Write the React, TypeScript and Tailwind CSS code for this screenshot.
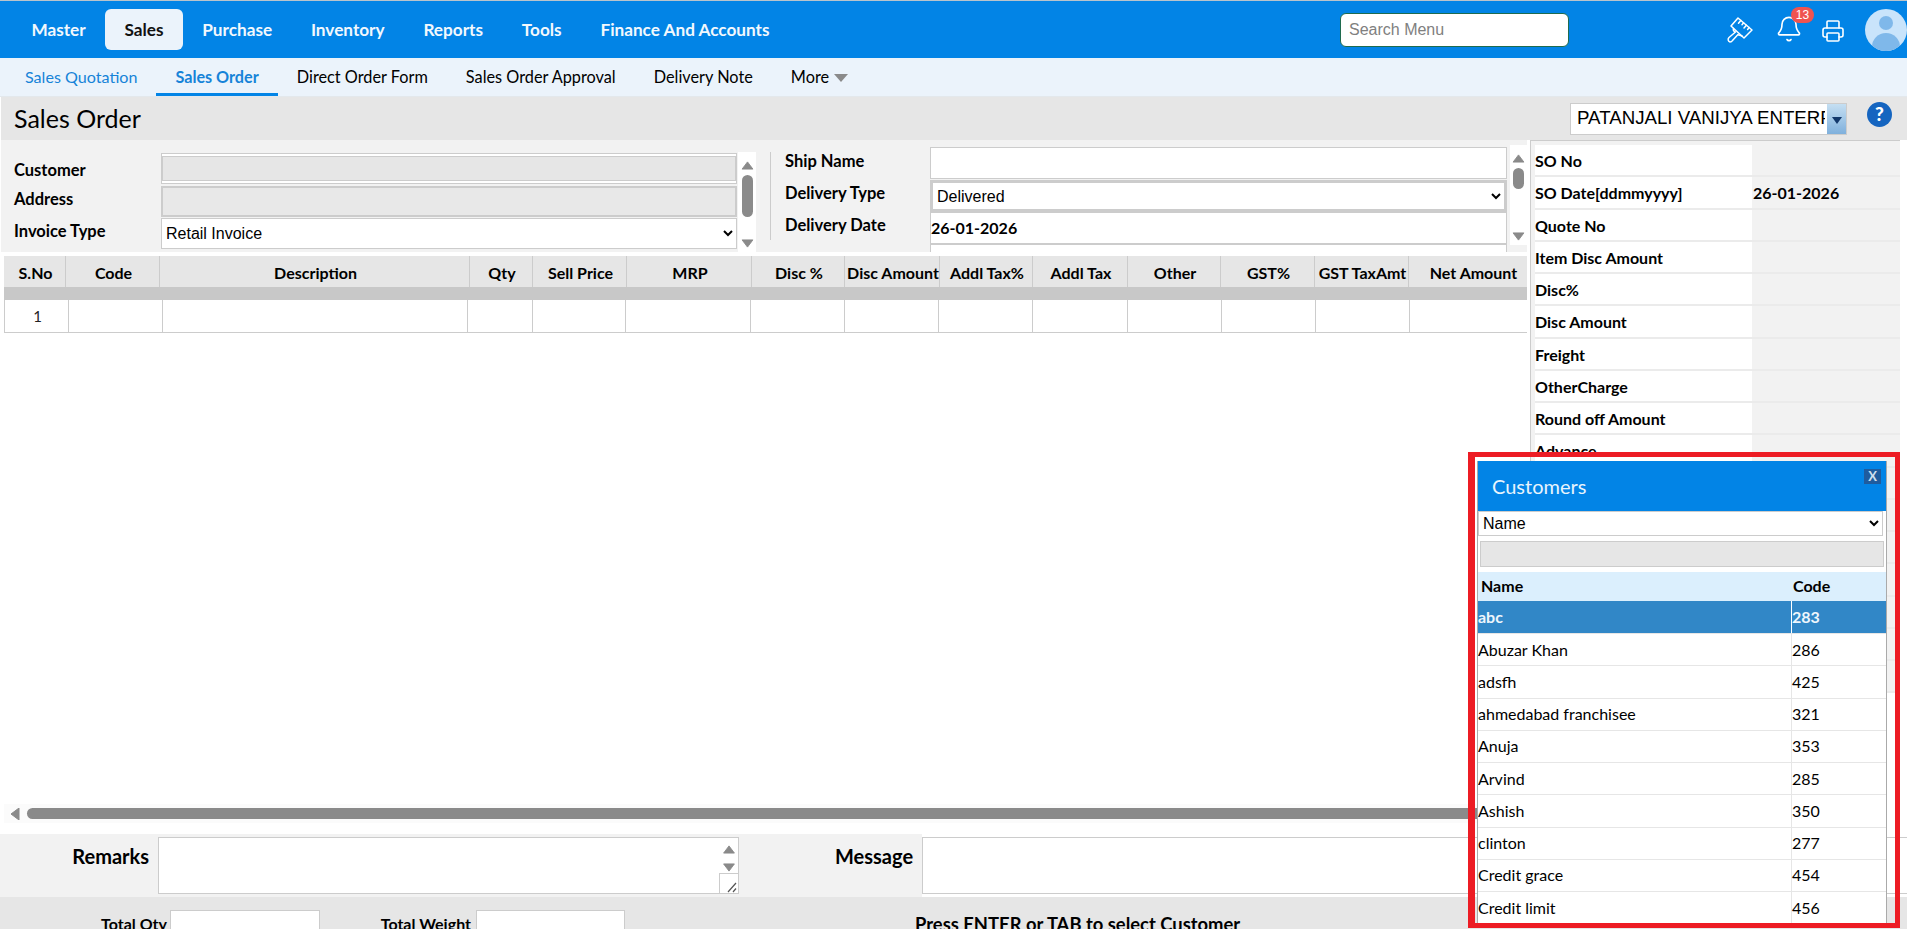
import { Bell, Printer } from "lucide-react"

const navItems = ["Master", "Sales", "Purchase", "Inventory", "Reports", "Tools", "Finance And Accounts"]
const subItems = ["Sales Quotation", "Sales Order", "Direct Order Form", "Sales Order Approval", "Delivery Note"]

const columns = [
    { name: "S.No", head: 62, cell: 65 },
    { name: "Code", head: 94, cell: 94 },
    { name: "Description", head: 310, cell: 305 },
    { name: "Qty", head: 63, cell: 65 },
    { name: "Sell Price", head: 94, cell: 93 },
    { name: "MRP", head: 125, cell: 125 },
    { name: "Disc %", head: 93, cell: 94 },
    { name: "Disc Amount", head: 95, cell: 94 },
    { name: "Addl Tax%", head: 93, cell: 94 },
    { name: "Addl Tax", head: 95, cell: 95 },
    { name: "Other", head: 93, cell: 94 },
    { name: "GST%", head: 94, cell: 94 },
    { name: "GST TaxAmt", head: 94, cell: 94 },
    { name: "Net Amount", head: 118, cell: 117 },
]

const summaryRows = [
    { label: "SO No", value: "" },
    { label: "SO Date[ddmmyyyy]", value: "26-01-2026" },
    { label: "Quote No", value: "" },
    { label: "Item Disc Amount", value: "" },
    { label: "Disc%", value: "" },
    { label: "Disc Amount", value: "" },
    { label: "Freight", value: "" },
    { label: "OtherCharge", value: "" },
    { label: "Round off Amount", value: "" },
    { label: "Advance", value: "" },
    { label: "", value: "" },
    { label: "", value: "" },
    { label: "", value: "" },
    { label: "", value: "" },
    { label: "", value: "" },
    { label: "", value: "" },
    { label: "", value: "" },
]

const customers = [
    { name: "Abuzar Khan", code: "286" },
    { name: "adsfh", code: "425" },
    { name: "ahmedabad franchisee", code: "321" },
    { name: "Anuja", code: "353" },
    { name: "Arvind", code: "285" },
    { name: "Ashish", code: "350" },
    { name: "clinton", code: "277" },
    { name: "Credit grace", code: "454" },
    { name: "Credit limit", code: "456" },
]

const Arrow = ({ dir, className }: { dir: "up" | "down" | "left"; className?: string }) => {
    const points = dir === "up" ? "6,1 12,9 0,9" : dir === "down" ? "0,1 12,1 6,9" : "9,0 9,12 1,6"
    return (
        <svg viewBox={dir === "left" ? "0 0 10 12" : "0 0 12 10"} className={className} fill="#8a8a8a">
            <polygon points={points} stroke="#8a8a8a" strokeLinejoin="round" />
        </svg>
    )
}

const VScroll = ({ thumb, className }: { thumb: string; className?: string }) => (
    <div className={`flex flex-col items-center bg-white ${className}`}>
        <Arrow dir="up" className="mt-[9px] h-[9px] w-[13px] shrink-0" />
        <div className={`mt-[5px] w-[11px] rounded-full bg-[#8a8a8a] ${thumb}`} />
        <div className="flex-1" />
        <Arrow dir="down" className="mb-[4px] h-[9px] w-[13px] shrink-0" />
    </div>
)

const BrushIcon = () => (
    <svg viewBox="0 0 26 26" className="h-[26px] w-[26px]" fill="none" stroke="white" strokeWidth="1.5" strokeLinejoin="round" strokeLinecap="round">
        <path d="M11 1 L25 13 L17 21 L4 9 Z" />
        <path d="M6.5 11.5 C6 13 7 14.5 8.5 15 L2 20.5 C0.5 22 1 24.5 3 25 C4 25 5 24.5 5.5 23.5 L11 17.5 C12.5 18.5 14 18.5 15 19" />
        <path d="M13.8 3.4 L11.5 6.2 M16.6 5.8 L15 7.7 M19.4 8.2 L17 11 M22.2 10.6 L20.6 12.5" />
    </svg>
)

const ResizeCorner = () => (
    <div className="absolute right-0 bottom-0 flex h-[20px] w-[19px] items-end justify-end border-t border-l border-[#ccc] bg-white">
        <svg viewBox="0 0 12 12" className="h-[12px] w-[12px]" stroke="#555" strokeWidth="1.2">
            <path d="M2 11 L10 2 M7 11 L10 7.5" />
        </svg>
    </div>
)

const Label = ({ text, className }: { text: string; className?: string }) => (
    <span className={`text-[16.5px] leading-none font-bold whitespace-nowrap text-black ${className}`}>{text}</span>
)

export default function App() {
    return (
        <div className="relative h-[929px] w-[1907px] overflow-hidden bg-white [font-family:Lato,sans-serif] text-black">
            {/* top bar */}
            <div className="flex h-[58px] items-center border-t border-[#b9c4cc] bg-[#0284e6] pl-[12px]">
                {navItems.map((item) => (
                    <div
                        key={item}
                        className={`flex h-[41px] items-center rounded-[6px] px-[19.4px] text-[17.2px] font-bold whitespace-nowrap ${item === "Sales" ? "bg-[#ebf3fb] text-[#111]" : "text-[#f2f8fd]"}`}
                    >
                        {item}
                    </div>
                ))}
                <div className="ml-auto flex h-[34px] w-[229px] items-center rounded-[6px] border border-[#1f6b4f] bg-white pl-[8px] [font-family:'Liberation_Sans',sans-serif] text-[16px] text-[#808080]">
                    Search Menu
                </div>
                <div className="ml-[158px]">
                    <BrushIcon />
                </div>
                <div className="relative ml-[22px] -mt-[2px]">
                    <Bell size={28} color="white" strokeWidth={1.4} />
                    <span className="absolute top-[-8px] left-[16px] flex h-[16px] w-[23px] items-center justify-center rounded-full bg-[#ef5350] [font-family:'Liberation_Sans',sans-serif] text-[12px] text-white">13</span>
                </div>
                <div className="ml-[18px] mt-[2px]">
                    <Printer size={24} color="white" strokeWidth={1.6} />
                </div>
                <div className="relative ml-[20px] h-[42px] w-[42px] shrink-0 overflow-hidden rounded-full bg-[#c9e4fb]">
                    <div className="absolute top-[7px] left-[14px] h-[14px] w-[14px] rounded-full bg-[#7fb8ea]" />
                    <div className="absolute top-[24px] left-[7px] h-[28px] w-[28px] rounded-full bg-[#7fb8ea]" />
                </div>
            </div>

            {/* sub nav */}
            <div className="flex h-[39px] items-stretch border-b border-[#e3e8ec] bg-[#ebf3fb] pl-[6px] text-[16.3px]">
                {subItems.map((item, i) => (
                    <div
                        key={item}
                        className={`flex items-center px-[19px] whitespace-nowrap ${i === 0 ? "text-[16.1px] text-[#1683d8]" : ""} ${i === 1 ? "border-b-[3px] border-[#0284e6] pt-[3px] text-[16.2px] font-bold text-[#1683d8]" : ""}`}
                    >
                        {item}
                    </div>
                ))}
                <div className="flex items-center gap-[5px] px-[19px]">
                    More
                    <svg viewBox="0 0 14 8" className="mt-[2px] h-[8px] w-[14px]" fill="#8a8a8a">
                        <polygon points="0,0 14,0 7,8" />
                    </svg>
                </div>
            </div>

            {/* title bar */}
            <div className="ml-[1px] flex h-[43px] items-center bg-[#e6e6e6] pl-[13px]">
                <h1 className="text-[25px] font-normal">Sales Order</h1>
                <div className="ml-auto flex h-[32px] w-[277px] items-stretch border border-[#ccc] bg-white">
                    <div className="mr-[2px] flex-1 overflow-hidden pl-[6px] [font-family:'Liberation_Sans',sans-serif] text-[18.7px] leading-[28px] whitespace-nowrap">
                        PATANJALI VANIJYA ENTERPRISES
                    </div>
                    <div className="flex w-[19px] shrink-0 items-center justify-center bg-gradient-to-b from-[#c5dff2] to-[#7fb0dc]">
                        <svg viewBox="0 0 10 7" className="mt-[4px] h-[7px] w-[10px]" fill="#12386b">
                            <polygon points="0,0 10,0 5,7" />
                        </svg>
                    </div>
                </div>
                <div className="mr-[15px] mb-[8px] ml-[20px] flex h-[25px] w-[25px] items-center justify-center rounded-full bg-[#1565c0] text-[19px] font-black text-white">
                    ?
                </div>
            </div>

            {/* main */}
            <div className="flex h-[694px]">
                <div className="flex w-[1530px] shrink-0 flex-col">
                    {/* header form */}
                    <div className="ml-[1px] flex h-[112px] w-[1526px] bg-[#f2f2f2]">
                        <div className="flex w-[736px] shrink-0 flex-col pt-[13px] pl-[13px]">
                            <div className="flex h-[33px]">
                                <Label text="Customer" className="w-[147px] pt-[9px]" />
                                <div className="flex h-[31px] flex-1 items-center border border-[#ccc] bg-white py-[2px]">
                                    <div className="h-full w-full border border-[#ccc] bg-[#e6e6e6]" />
                                </div>
                            </div>
                            <div className="flex h-[32px]">
                                <Label text="Address" className="w-[147px] pt-[5px]" />
                                <div className="h-[31px] flex-1 border-2 border-[#ccc] bg-[#e8e8e8]" />
                            </div>
                            <div className="flex h-[31px]">
                                <Label text="Invoice Type" className="w-[147px] pt-[5px]" />
                                <select className="h-[31px] flex-1 border border-[#ccc] bg-white [font-family:'Liberation_Sans',sans-serif] text-[16px]" defaultValue="Retail Invoice">
                                    <option>Retail Invoice</option>
                                </select>
                            </div>
                        </div>
                        <VScroll thumb="h-[42px]" className="mt-[12px] ml-[1px] w-[18px] shrink-0" />
                        <div className="mt-[12px] ml-[14px] h-[88px] w-px bg-[#ccc]" />
                        <div className="flex w-[736px] shrink-0 flex-col pt-[7px] pl-[14px]">
                            <div className="flex h-[33px]">
                                <Label text="Ship Name" className="w-[145px] pt-[6px]" />
                                <div className="h-[32px] flex-1 border border-[#ccc] bg-white" />
                            </div>
                            <div className="flex h-[32px]">
                                <Label text="Delivery Type" className="w-[145px] pt-[5px]" />
                                <select className="h-[32px] flex-1 border-[3px] border-[#ccc] bg-white [font-family:'Liberation_Sans',sans-serif] text-[16px]" defaultValue="Delivered">
                                    <option>Delivered</option>
                                </select>
                            </div>
                            <div className="flex h-[32px]">
                                <Label text="Delivery Date" className="w-[145px] pt-[5px]" />
                                <div className="flex h-[32px] flex-1 items-center border border-[#ccc] bg-white text-[16px] font-bold">26-01-2026</div>
                            </div>
                            <div className="ml-[145px] h-[8px] border border-b-0 border-[#ccc] bg-white" />
                        </div>
                        <VScroll thumb="h-[21px]" className="mt-[5px] ml-[3px] h-[100px] w-[17px] shrink-0" />
                    </div>

                    {/* items table */}
                    <div className="mt-[4px] ml-[4px] w-[1523px]">
                        <div className="flex h-[31px] bg-[#e6e6e6]">
                            {columns.map((col, i) => (
                                <div
                                    key={col.name}
                                    style={{ width: col.head }}
                                    className={`flex shrink-0 items-center justify-center pt-[2px] text-[16px] font-bold whitespace-nowrap ${i < columns.length - 1 ? "border-r border-[#ccc] pl-[2px]" : "pl-[11px]"}`}
                                >
                                    {col.name}
                                </div>
                            ))}
                        </div>
                        <div className="h-[13px] bg-[#c8c8c8]" />
                        <div className="flex h-[33px] border-b border-[#ccc]">
                            {columns.map((col, i) => (
                                <div
                                    key={col.name}
                                    style={{ width: col.cell }}
                                    className={`flex shrink-0 items-center justify-center text-[15px] text-[#222] ${i === 0 ? "border-l pl-[2px]" : ""} ${i < columns.length - 1 ? "border-r" : ""} border-[#ccc]`}
                                >
                                    {i === 0 ? "1" : ""}
                                </div>
                            ))}
                        </div>
                    </div>

                    {/* horizontal scroll */}
                    <div className="mt-auto mb-[11px] ml-[4px] flex h-[19px] items-start bg-[#fbfbfb] pt-[4px] pl-[6px]">
                        <Arrow dir="left" className="h-[12px] w-[10px] shrink-0" />
                        <div className="ml-[7px] h-[11px] flex-1 rounded-l-full bg-[#8a8a8a]" />
                    </div>
                </div>

                {/* summary panel */}
                <div className="h-[553px] w-[370px] shrink-0 border-t border-l border-[#ccc] bg-[#f2f2f2] pt-[4px] pl-[4px]">
                    {summaryRows.map((row, i) => (
                        <div key={i} className="flex h-[32.25px] border-b-2 border-[#ebebeb]">
                            <div className="flex w-[217px] shrink-0 items-center bg-white pt-[2px] text-[16px] font-bold">{row.label}</div>
                            <div className="flex w-[146px] shrink-0 items-center pt-[2px] pl-[1px] text-[16px] font-bold">{row.value}</div>
                        </div>
                    ))}
                </div>
            </div>

            {/* remarks */}
            <div className="flex h-[63px]">
                <div className="flex h-full w-[922px] shrink-0 items-start bg-[#f2f2f2] pt-[3px]">
                    <span className="mt-[4px] w-[149px] text-right text-[20px] leading-[30px] font-bold">Remarks</span>
                    <div className="relative ml-[9px] h-[57px] w-[581px] border border-[#ccc] bg-white">
                        <div className="absolute top-[7px] right-[3px]">
                            <Arrow dir="up" className="h-[9px] w-[12px]" />
                            <Arrow dir="down" className="mt-[9px] h-[9px] w-[12px]" />
                        </div>
                        <ResizeCorner />
                    </div>
                    <span className="mt-[4px] ml-[96px] text-[20px] leading-[30px] font-bold">Message</span>
                </div>
                <div className="flex-1 pt-[3px]">
                    <div className="h-[57px] border border-r-0 border-[#ccc] bg-white" />
                </div>
            </div>

            {/* totals */}
            <div className="flex h-[32px] items-start bg-[#e6e6e6] pt-[13px]">
                <span className="w-[167px] pt-[6px] text-right text-[16px] leading-none font-bold">Total Qty</span>
                <div className="ml-[3px] h-[40px] w-[150px] border border-[#ccc] bg-white" />
                <span className="w-[151px] pt-[6px] text-right text-[16px] leading-none font-bold">Total Weight</span>
                <div className="ml-[5px] h-[40px] w-[149px] border border-[#ccc] bg-white" />
                <span className="ml-[290px] pt-[5px] text-[18.4px] leading-none font-bold whitespace-nowrap">Press ENTER or TAB to select Customer</span>
            </div>

            {/* customers popup */}
            <div className="absolute top-[461px] left-[1477px] flex h-[463px] w-[410px] flex-col overflow-hidden border-x border-[#aaa] bg-white">
                <div className="relative flex h-[50px] shrink-0 items-center bg-[#0284e6] pl-[14px] text-[20px] text-[#e8f4fd]">
                    Customers
                    <div className="absolute top-[8px] right-[5px] flex h-[15px] w-[17px] items-center justify-center bg-[#1f5c9e] text-[13px] leading-none font-bold text-[#cfe0f0]">X</div>
                </div>
                <select className="mr-[3px] h-[25px] shrink-0 border border-[#ccc] bg-white [font-family:'Liberation_Sans',sans-serif] text-[16px]" defaultValue="Name">
                    <option>Name</option>
                </select>
                <div className="mx-[2px] mt-[5px] h-[26px] shrink-0 border border-[#ccc] bg-[#e6e6e6]" />
                <div className="mt-[5px] flex h-[29px] shrink-0 bg-[#dbeffd] text-[16px] font-bold">
                    <div className="w-[314px] pt-[2px] pl-[3px]">Name</div>
                    <div className="pt-[2px] pl-[1px]">Code</div>
                </div>
                <div className="flex h-[33px] shrink-0 border-b border-[#e6e6e6] bg-[#3187c7] text-[16px] font-bold text-[#eef6fc]">
                    <div className="flex w-[314px] items-center border-r border-white">abc</div>
                    <div className="flex items-center">283</div>
                </div>
                {customers.map((c) => (
                    <div key={c.name} className="flex h-[32.25px] shrink-0 border-b border-[#e6e6e6] text-[16px]">
                        <div className="flex w-[314px] items-center border-r border-[#e6e6e6]">{c.name}</div>
                        <div className="flex items-center">{c.code}</div>
                    </div>
                ))}
            </div>

            {/* red annotation frame */}
            <div className="pointer-events-none absolute top-[452px] left-[1468px] h-[476px] w-[432px] border-[5px] border-l-[7px] border-[#ed1c24]" />
        </div>
    )
}
